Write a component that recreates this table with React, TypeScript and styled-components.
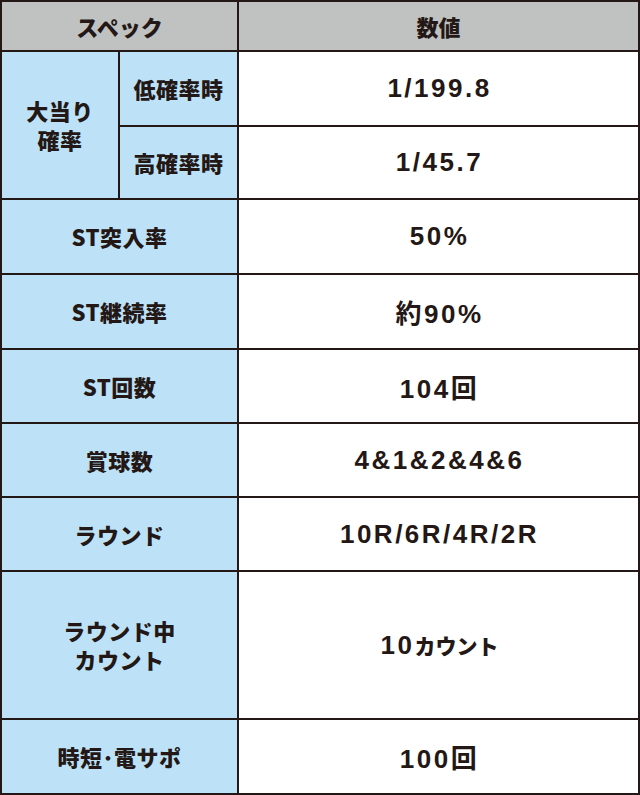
import styled, { createGlobalStyle } from 'styled-components'

const GlobalStyle = createGlobalStyle`
  html, body {
    margin: 0;
    padding: 0;
    background: #ffffff;
  }
`

const SpecTable = styled.div`
  display: grid;
  grid-template-columns: 116px 117px 399px;
  grid-template-rows: 48px 73px 71px 73px 73px 72px 72px 72px 146px 73px;
  gap: 2px;
  padding: 2px;
  width: 640px;
  box-sizing: border-box;
  background: #231815;
  color: #231815;
  font-family: 'Noto Sans CJK JP', 'Noto Sans', sans-serif;
  font-weight: 900;
`

const Cell = styled.div<{ $span?: number; $rows?: number }>`
  display: flex;
  align-items: center;
  justify-content: center;
  text-align: center;
  grid-column: span ${(p) => p.$span ?? 1};
  grid-row: span ${(p) => p.$rows ?? 1};
`

const HeadCell = styled(Cell)`
  background: #c0c1c1;
  font-size: 22px;
`

const LabelCell = styled(Cell)`
  background: #bde2f7;
  font-size: 22px;
  line-height: 29px;
  letter-spacing: 0.5px;
`

const ValueCell = styled(Cell)`
  background: #ffffff;
  font-family: 'Liberation Sans', 'Noto Sans CJK JP', sans-serif;
  font-weight: 700;
  font-size: 26px;
  letter-spacing: 2.5px;
  padding-left: 2px;
`

const Kana = styled.span`
  font-family: 'Noto Sans CJK JP', sans-serif;
  font-weight: 900;
  font-size: 21px;
  letter-spacing: 0;
`

type Row = { label: React.ReactNode; value: React.ReactNode }

const rows: Row[] = [
  { label: 'ST突入率', value: '50%' },
  { label: 'ST継続率', value: '約90%' },
  { label: 'ST回数', value: '104回' },
  { label: '賞球数', value: '4&1&2&4&6' },
  { label: 'ラウンド', value: '10R/6R/4R/2R' },
  {
    label: (
      <>
        ラウンド中
        <br />
        カウント
      </>
    ),
    value: (
      <>
        10<Kana>カウント</Kana>
      </>
    ),
  },
  { label: '時短･電サポ', value: '100回' },
]

function App() {
  return (
    <>
      <GlobalStyle />
      <SpecTable>
        <HeadCell $span={2}>スペック</HeadCell>
        <HeadCell>数値</HeadCell>

        <LabelCell $rows={2}>
          <div>
            大当り
            <br />
            確率
          </div>
        </LabelCell>
        <LabelCell>低確率時</LabelCell>
        <ValueCell>1/199.8</ValueCell>
        <LabelCell>高確率時</LabelCell>
        <ValueCell>1/45.7</ValueCell>

        {rows.map((r, i) => (
          <>
            <LabelCell key={`l${i}`} $span={2}>
              <div>{r.label}</div>
            </LabelCell>
            <ValueCell key={`v${i}`}>
              <div>{r.value}</div>
            </ValueCell>
          </>
        ))}
      </SpecTable>
    </>
  )
}

export default App
